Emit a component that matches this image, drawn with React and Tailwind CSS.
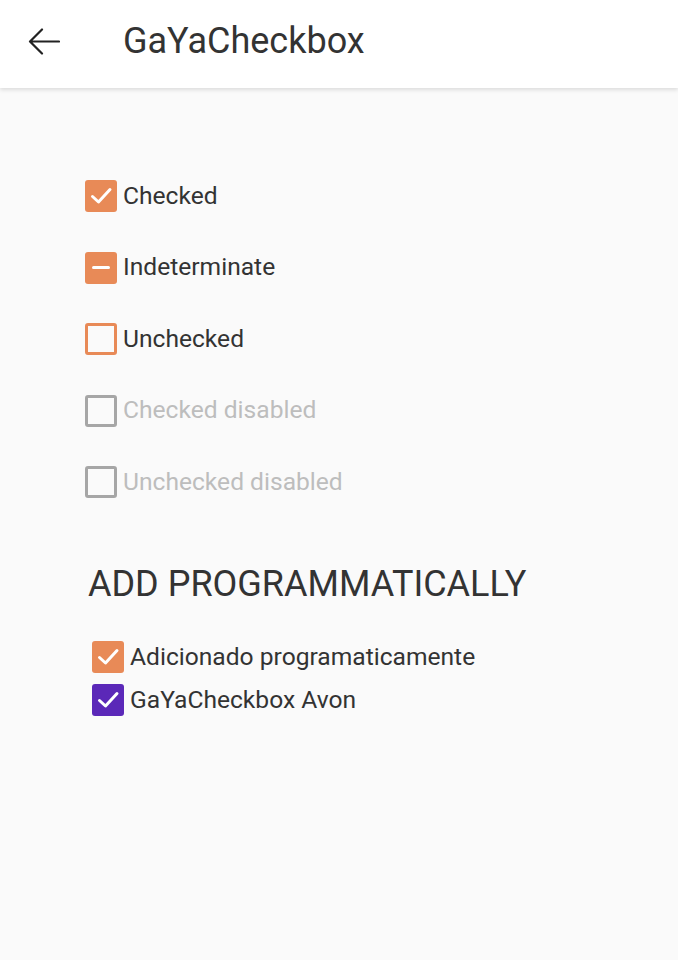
import React from 'react';

const font = { fontFamily: 'Roboto, "Noto Sans", sans-serif' };

function Box({ variant }) {
  if (variant === 'checked' || variant === 'purple') {
    const bg = variant === 'purple' ? 'bg-[#5B28B8]' : 'bg-[#E88A57]';
    return (
      <span className={`w-8 h-8 rounded-[3px] ${bg} flex items-center justify-center shrink-0`}>
        <svg width="24" height="24" viewBox="0 0 24 24" fill="none">
          <path d="M3.5 12.5 L9.5 18 L21 5.5" stroke="white" strokeWidth="3" strokeLinecap="round" strokeLinejoin="round" />
        </svg>
      </span>
    );
  }
  if (variant === 'indeterminate') {
    return (
      <span className="w-8 h-8 rounded-[3px] bg-[#E88A57] flex items-center justify-center shrink-0">
        <span className="w-[18px] h-[3px] bg-white rounded-sm" />
      </span>
    );
  }
  if (variant === 'unchecked') {
    return <span className="w-8 h-8 rounded-[3px] border-[3px] border-[#E88A57] shrink-0" />;
  }
  return <span className="w-8 h-8 rounded-[3px] border-[3px] border-[#A6A6A6] shrink-0" />;
}

function Row({ variant, label, disabled }) {
  return (
    <div className="flex items-center gap-[6px] h-8">
      <Box variant={variant} />
      <span className={`text-[24.6px] leading-none ${disabled ? 'text-[#BDBDBD]' : 'text-[#333333]'}`}>{label}</span>
    </div>
  );
}

export default function App() {
  return (
    <div className="w-[678px] h-[960px] bg-[#FAFAFA] overflow-hidden" style={font}>
      <header className="h-[88px] bg-white flex items-center shadow-[0_2px_4px_rgba(0,0,0,0.12)] relative">
        <svg className="ml-[28px] -mt-[4px]" width="32" height="28" viewBox="0 0 32 28" fill="none">
          <path d="M31 13.5 H3 M14 1.5 L2 13.5 L14 25.5" stroke="#222" strokeWidth="2.2" strokeLinecap="round" strokeLinejoin="round" />
        </svg>
        <h1 className="ml-[63px] -mt-[6px] text-[36px] text-[#333333] leading-none">GaYaCheckbox</h1>
      </header>

      <div className="pl-[85px] pt-[92px] flex flex-col gap-[39.5px]">
        <Row variant="checked" label="Checked" />
        <Row variant="indeterminate" label="Indeterminate" />
        <Row variant="unchecked" label="Unchecked" />
        <Row variant="disabled" label="Checked disabled" disabled />
        <Row variant="disabled" label="Unchecked disabled" disabled />
      </div>

      <h2 className="ml-[88px] mt-[68px] text-[36px] leading-none text-[#333333]">ADD PROGRAMMATICALLY</h2>

      <div className="pl-[92px] pt-[39px] flex flex-col gap-[11px]">
        <Row variant="checked" label="Adicionado programaticamente" />
        <Row variant="purple" label="GaYaCheckbox Avon" />
      </div>
    </div>
  );
}
